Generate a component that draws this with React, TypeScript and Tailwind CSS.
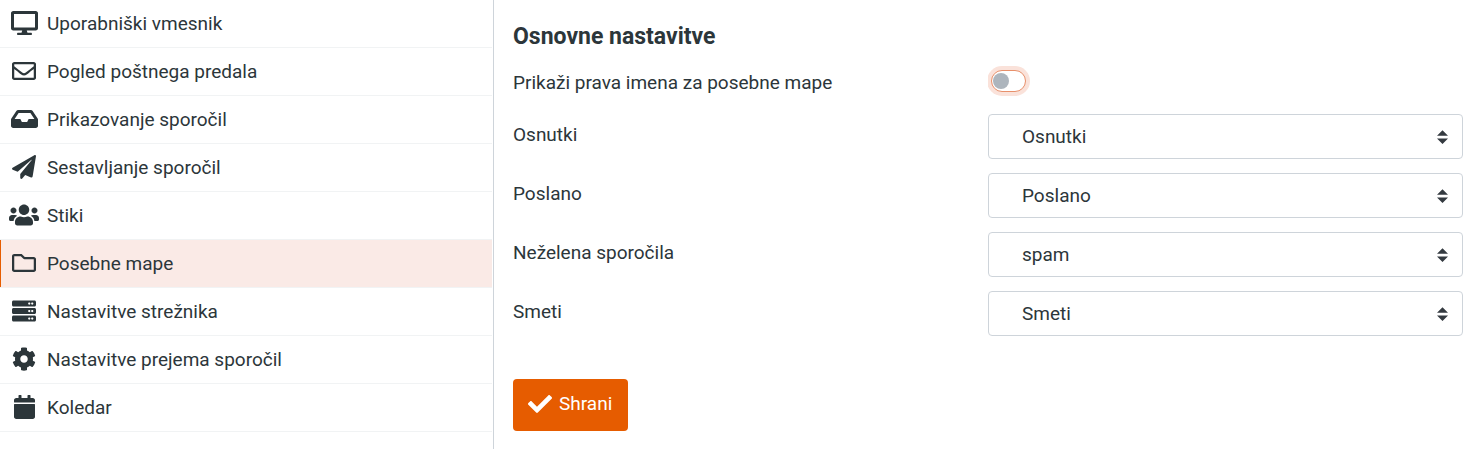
import { useState } from 'react'
import {
  FaCalendar,
  FaCheck,
  FaCog,
  FaDesktop,
  FaInbox,
  FaPaperPlane,
  FaRegEnvelope,
  FaRegFolder,
  FaServer,
  FaUsers,
} from 'react-icons/fa'

const sections = [
  { label: 'Uporabniški vmesnik', icon: FaDesktop, size: 'h-6 w-[27px]' },
  { label: 'Pogled poštnega predala', icon: FaRegEnvelope, size: 'size-6' },
  { label: 'Prikazovanje sporočil', icon: FaInbox, size: 'h-6 w-[27px]' },
  { label: 'Sestavljanje sporočil', icon: FaPaperPlane, size: 'size-6' },
  { label: 'Stiki', icon: FaUsers, size: 'h-6 w-[30px]' },
  { label: 'Posebne mape', icon: FaRegFolder, size: 'size-6', active: true },
  { label: 'Nastavitve strežnika', icon: FaServer, size: 'size-6' },
  { label: 'Nastavitve prejema sporočil', icon: FaCog, size: 'size-6' },
  { label: 'Koledar', icon: FaCalendar, size: 'h-6 w-[21px]' },
]

const folders = [
  { id: 'drafts', label: 'Osnutki', value: 'Osnutki' },
  { id: 'sent', label: 'Poslano', value: 'Poslano' },
  { id: 'junk', label: 'Neželena sporočila', value: 'spam' },
  { id: 'trash', label: 'Smeti', value: 'Smeti' },
]

const options = ['Osnutki', 'Poslano', 'spam', 'Smeti']

function Sidebar() {
  return (
    <nav className="w-[494px] shrink-0 border-r border-[#ced4da] pr-px">
      <ul>
        {sections.map(({ label, icon: Icon, size, active }) => (
          <li key={label} className="border-b border-[#f1f3f4]">
            <a
              href="#"
              className={
                active
                  ? 'flex h-[47px] items-center gap-2 border-l border-[#e65c00] bg-[#faeae6] pl-2'
                  : 'flex h-[47px] items-center gap-2 pl-[9px]'
              }
            >
              <span className="flex w-[30px] shrink-0 justify-center pb-px">
                <Icon className={size} />
              </span>
              {label}
            </a>
          </li>
        ))}
      </ul>
    </nav>
  )
}

function FolderRow({ id, label, value }: { id: string; label: string; value: string }) {
  return (
    <div className="grid grid-cols-2">
      <label htmlFor={id} className="pt-[7px]">
        {label}
      </label>
      <div className="relative">
        <select
          id={id}
          defaultValue={value}
          className="block h-[45px] w-full appearance-none rounded border border-[#ced4da] bg-white pr-10 pl-[33px]"
        >
          {options.map((option) => (
            <option key={option}>{option}</option>
          ))}
        </select>
        <svg
          viewBox="0 0 4 5"
          className="pointer-events-none absolute top-4 right-[15px] h-3.5 w-[11px] text-[#343a40]"
          fill="currentColor"
          aria-hidden="true"
        >
          <path d="M2 0L0 2h4zm0 5L0 3h4z" />
        </svg>
      </div>
    </div>
  )
}

export default function App() {
  const [realNames, setRealNames] = useState(false)

  return (
    <div className="flex min-h-screen bg-white font-[Roboto,sans-serif] text-[19px] leading-7 text-[#2c363a]">
      <Sidebar />
      <main className="min-w-0 flex-1 pt-[21px] pr-[9px] pb-4 pl-[19px]">
        <form onSubmit={(e) => e.preventDefault()}>
          <h1 className="text-[23px] leading-8 font-bold">Osnovne nastavitve</h1>
          <div className="mt-[11px] grid grid-cols-2">
            <label htmlFor="real-names" className="pt-[5px]">
              Prikaži prava imena za posebne mape
            </label>
            <div className="overflow-hidden py-1.5 pl-[3px]">
              <input
                id="real-names"
                type="checkbox"
                role="switch"
                checked={realNames}
                onChange={(e) => setRealNames(e.target.checked)}
                className="block h-[22px] w-[35px] appearance-none rounded-full border border-[#e8906b] bg-white pt-0.5 pl-px ring-4 ring-[#fae2da] before:block before:size-4 before:rounded-full before:bg-[#adb5bd] checked:before:translate-x-3.5"
              />
            </div>
          </div>
          <div className="mt-4 flex flex-col gap-3.5">
            {folders.map((folder) => (
              <FolderRow key={folder.id} {...folder} />
            ))}
          </div>
          <button
            type="submit"
            className="mt-[43px] flex h-[52px] items-center gap-[7px] rounded bg-[#e65c00] pr-4 pb-0.5 pl-[15px] text-white"
          >
            <FaCheck className="size-6" />
            Shrani
          </button>
        </form>
      </main>
    </div>
  )
}
